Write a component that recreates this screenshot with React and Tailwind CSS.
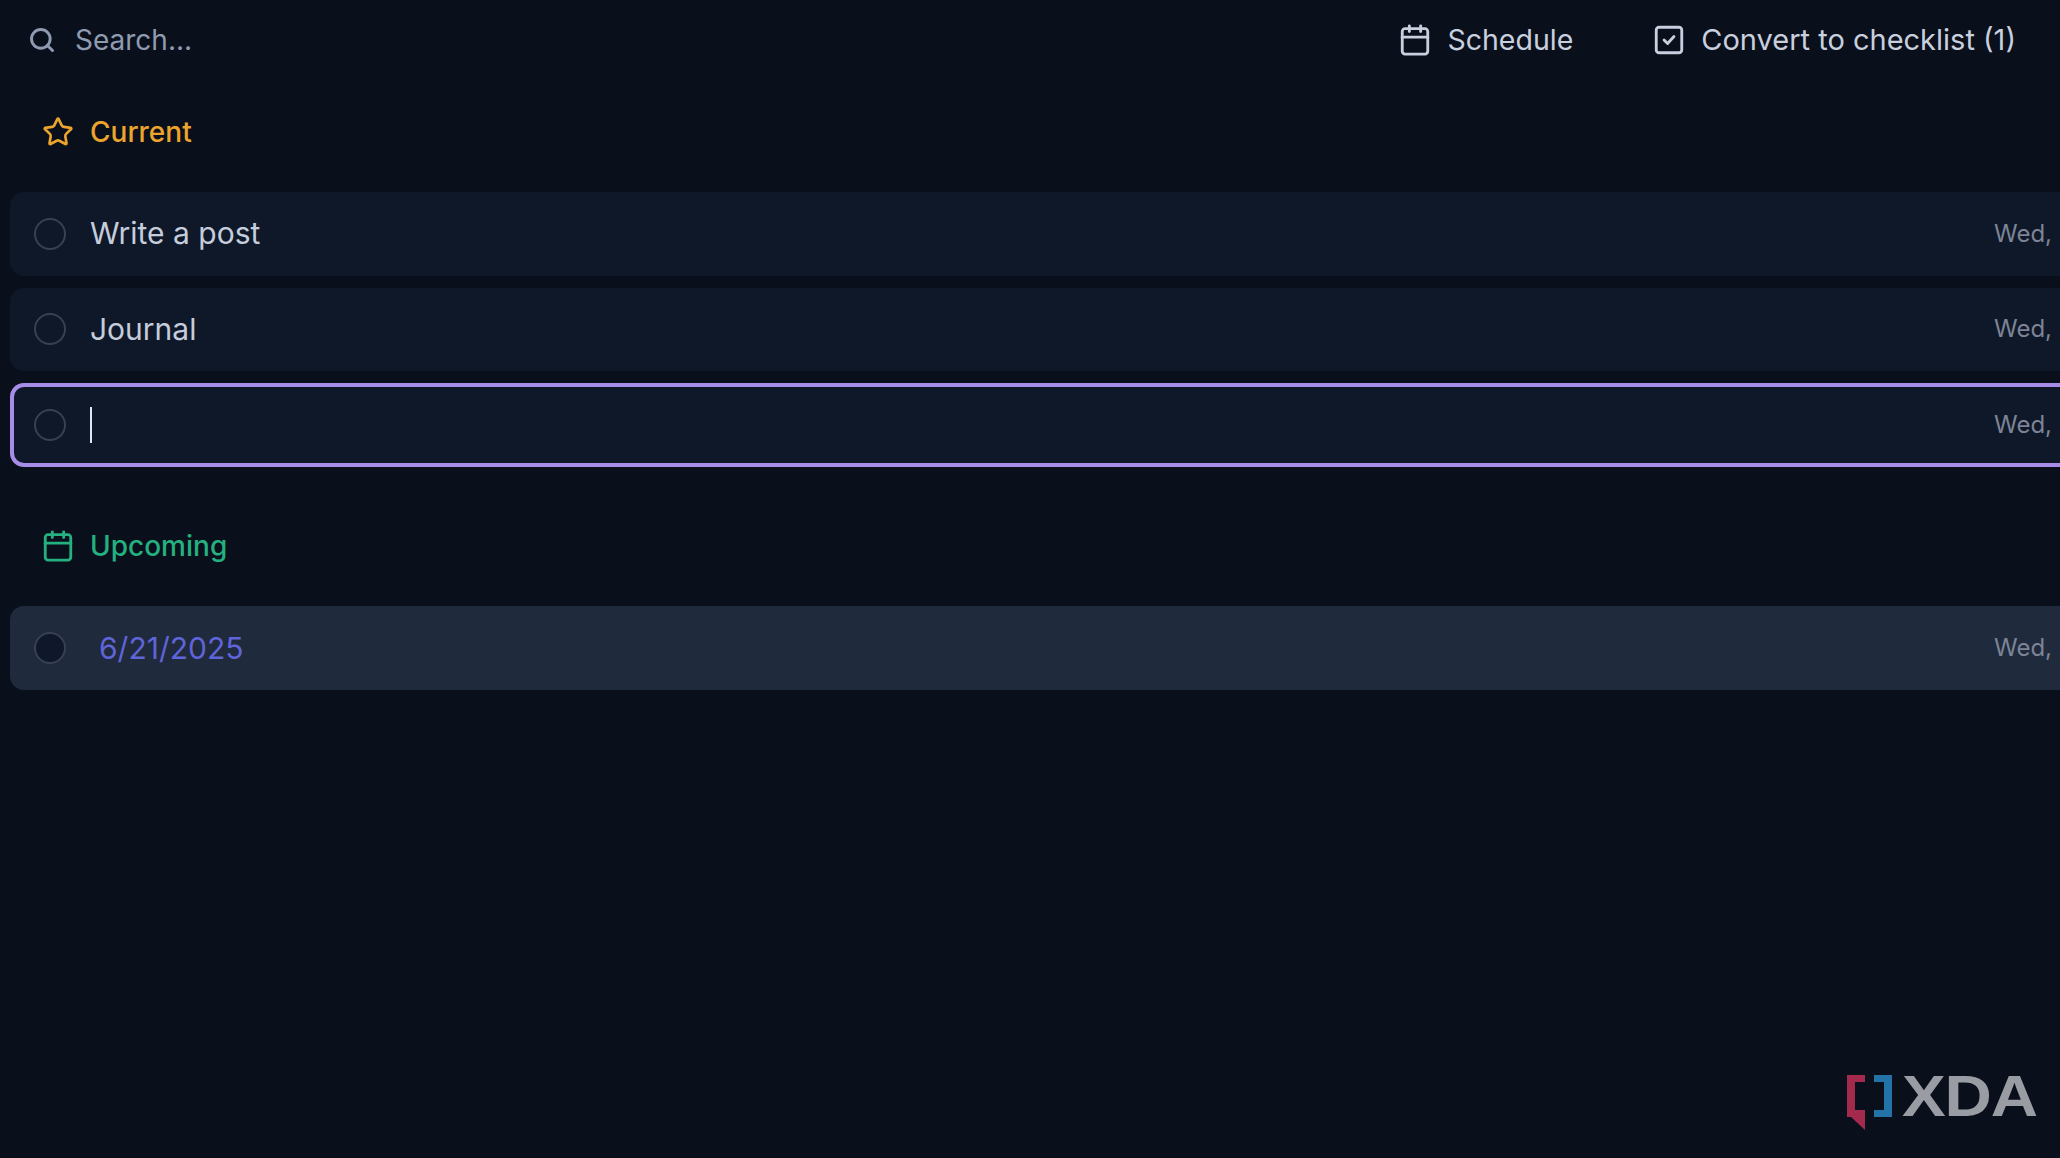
import React from 'react'
import { Search, Star, Calendar } from 'lucide-react'

function CheckBox({ className }) {
  return (
    <svg viewBox="0 0 24 24" fill="none" stroke="currentColor" strokeWidth="2" strokeLinecap="round" strokeLinejoin="round" className={className}>
      <rect x="3" y="3" width="18" height="18" rx="2" />
      <path d="m8.5 12 2.5 2.5 4.5-5" />
    </svg>
  )
}

function Row({ active, hover, children }) {
  let tone = 'h-[83.5px] bg-[#0f1828]'
  if (hover) tone = 'h-[84px] bg-[#1f2a3c]'
  if (active) tone = 'h-[83.5px] bg-[#0f1828] border-4 border-r-0 border-[#a78de8]'
  return (
    <div className={`ml-[10px] rounded-l-[14px] flex items-center justify-between relative ${tone}`}>
      <div className={`flex items-center ${active ? 'pl-[20px]' : 'pl-[24px]'}`}>
        <div className={`w-[32px] h-[32px] rounded-full border-[2.5px] border-[#374151] ${hover ? 'bg-[#0f172a]' : ''}`} />
        {children}
      </div>
      <span className="pr-[8px] text-[24px] text-[#7c8496]">Wed,</span>
    </div>
  )
}

export default function App() {
  return (
    <div className="relative w-[2060px] h-[1158px] overflow-hidden bg-[#0a0f1c] font-['Inter',sans-serif]">
      {/* Top bar */}
      <div className="h-[80px] flex items-center justify-between pl-[28px] pr-[44px]">
        <div className="flex items-center gap-[19px] text-[#8f9bb0]">
          <Search className="w-[28px] h-[28px]" strokeWidth={2.5} />
          <span className="text-[28px]">Search...</span>
        </div>
        <div className="flex items-center gap-[79px] text-[#c8cfde] text-[29px]">
          <div className="flex items-center gap-[15px]">
            <Calendar className="w-[34px] h-[34px]" />
            <span className="text-[28.5px]">Schedule</span>
          </div>
          <div className="flex items-center gap-[15px]">
            <CheckBox className="w-[34px] h-[34px]" />
            <span>Convert to checklist (1)</span>
          </div>
        </div>
      </div>

      {/* Current */}
      <div className="h-[112px] pb-[9px] flex items-center pl-[42px] gap-[16px] text-[#eba42c]">
        <Star className="w-[32px] h-[32px]" />
        <span className="text-[28px] font-medium">Current</span>
      </div>
      <div className="flex flex-col gap-[12px]">
        <Row>
          <span className="ml-[24px] text-[30px] text-[#c5cddd]">Write a post</span>
        </Row>
        <Row>
          <span className="ml-[24px] text-[30px] text-[#c5cddd]">Journal</span>
        </Row>
        <Row active>
          <div className="ml-[24px] w-[2px] h-[36px] bg-[#dfe4ee]" />
        </Row>
      </div>

      {/* Upcoming */}
      <div className="h-[139.5px] pt-[19px] flex items-center pl-[41px] gap-[15px] text-[#25b07f]">
        <Calendar className="w-[34px] h-[34px]" />
        <span className="text-[28px] font-medium">Upcoming</span>
      </div>
      <Row hover>
        <span className="ml-[33px] text-[30px] text-[#5f64d8]">6/21/2025</span>
      </Row>

      {/* Watermark */}
      <div className="absolute left-[1847px] top-[1075px] flex items-start">
        <svg viewBox="0 0 46 55" className="w-[46px] h-[55px]">
          <path d="M0 0h18v7H8v28h10v20L4 42H0z" fill="#a32a4c" />
          <path d="M27 0h18v42H27v-7h10V7H27z" fill="#2273a8" />
        </svg>
        <span className="ml-[9px] w-[135px] origin-left scale-x-[1.13] text-[58px] leading-[42px] font-bold tracking-[-1px] text-[#9a9ca3] font-['Liberation_Sans',sans-serif]">XDA</span>
      </div>
    </div>
  )
}
